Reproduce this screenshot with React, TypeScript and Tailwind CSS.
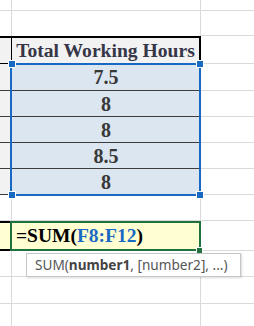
import React from "react";

const serif = { fontFamily: '"Liberation Serif", "Times New Roman", serif' };

const hours = ["7.5", "8", "8", "8.5", "8"];

// one plain sheet row: A | B | C with light gridlines
function BlankRow({ h }: { h: string }) {
  return (
    <div className={`flex ${h}`}>
      <div className="w-[12px] border-r border-b border-[#dadada]" />
      <div className="w-[189px] border-r border-b border-[#dadada]" />
      <div className="flex-1 border-b border-[#dadada]" />
    </div>
  );
}

function Handle({ className }: { className: string }) {
  return <div className={`absolute w-[6px] h-[6px] bg-[#1769c1] outline outline-1 outline-white ${className}`} />;
}

export default function App() {
  return (
    <div className="relative w-[254px] h-[326px] overflow-hidden bg-white" style={serif}>
      <BlankRow h="h-[11px]" />
      <div className="flex h-[25px]">
        <div className="w-[12px] border-r border-[#dadada]" />
        <div className="w-[189px] border-r border-[#dadada]" />
        <div className="flex-1 border-b border-[#dadada]" />
      </div>

      {/* header */}
      <div className="flex h-[28px]">
        <div className="w-[12px] bg-[#f2f2f2] border-t-2 border-b border-r border-black" />
        <div className="w-[189px] bg-[#f2f2f2] border-t-2 border-r-2 border-black flex items-center justify-center text-[19.6px] font-bold text-[#363648] leading-none whitespace-nowrap">
          Total Working Hours
        </div>
        <div className="flex-1 border-b border-[#dadada]" />
      </div>

      {hours.map((v, i) => (
        <div key={i} className={`flex ${i === 0 ? "h-[27px]" : "h-[26px]"}`}>
          <div className="w-[12px] bg-[#f2f2f2] border-b border-[#3c3c3c]" />
          <div className="w-[188px] bg-[#dce6f0] border-b border-[#3c3c3c] flex items-center justify-center text-[20px] font-bold text-[#383838] leading-none">
            {v}
          </div>
          <div className="flex-1 border-l border-b border-[#dadada]" />
        </div>
      ))}

      <BlankRow h="h-[26px]" />

      {/* formula row */}
      <div className="flex h-[30px]">
        <div className="w-[12px] bg-[#ffffd2] border-t-2 border-b-2 border-black" />
        <div className="w-[189px] bg-[#ffffd2] flex items-center pl-[4px] text-[19.5px] font-bold leading-none text-black whitespace-nowrap">
          =SUM(<span className="text-[#1a6ac4]">F8:F12</span>)
        </div>
        <div className="flex-1 border-b border-[#dadada]" />
      </div>

      <BlankRow h="h-[26px]" />
      <BlankRow h="h-[27px]" />
      <BlankRow h="h-[30px]" />

      {/* range selection */}
      <div className="absolute left-[10px] top-[63px] w-[191px] h-[133px] border-2 border-[#1769c1]" />
      <Handle className="left-[9px] top-[61px]" />
      <Handle className="left-[197px] top-[61px]" />
      <Handle className="left-[9px] top-[192px]" />
      <Handle className="left-[197px] top-[192px]" />

      {/* active cell */}
      <div className="absolute left-[10px] top-[221px] w-[191px] h-[30px] border-2 border-[#21703f]" />
      <div className="absolute left-[197px] top-[248px] w-[5px] h-[5px] bg-[#21703f] outline outline-1 outline-white" />

      {/* function tooltip */}
      <div
        className="absolute left-[26px] top-[253px] w-[215px] h-[24px] bg-white border border-[#c6c6c6] shadow-[1px_1px_2px_rgba(0,0,0,0.15)] flex items-center pl-[8px] text-[13.6px] text-[#555] whitespace-nowrap"
        style={{ fontFamily: '"Noto Sans", "Open Sans", sans-serif' }}
      >
        SUM(<span className="font-bold text-[#444]">number1</span>, [number2], ...)
      </div>
    </div>
  );
}
